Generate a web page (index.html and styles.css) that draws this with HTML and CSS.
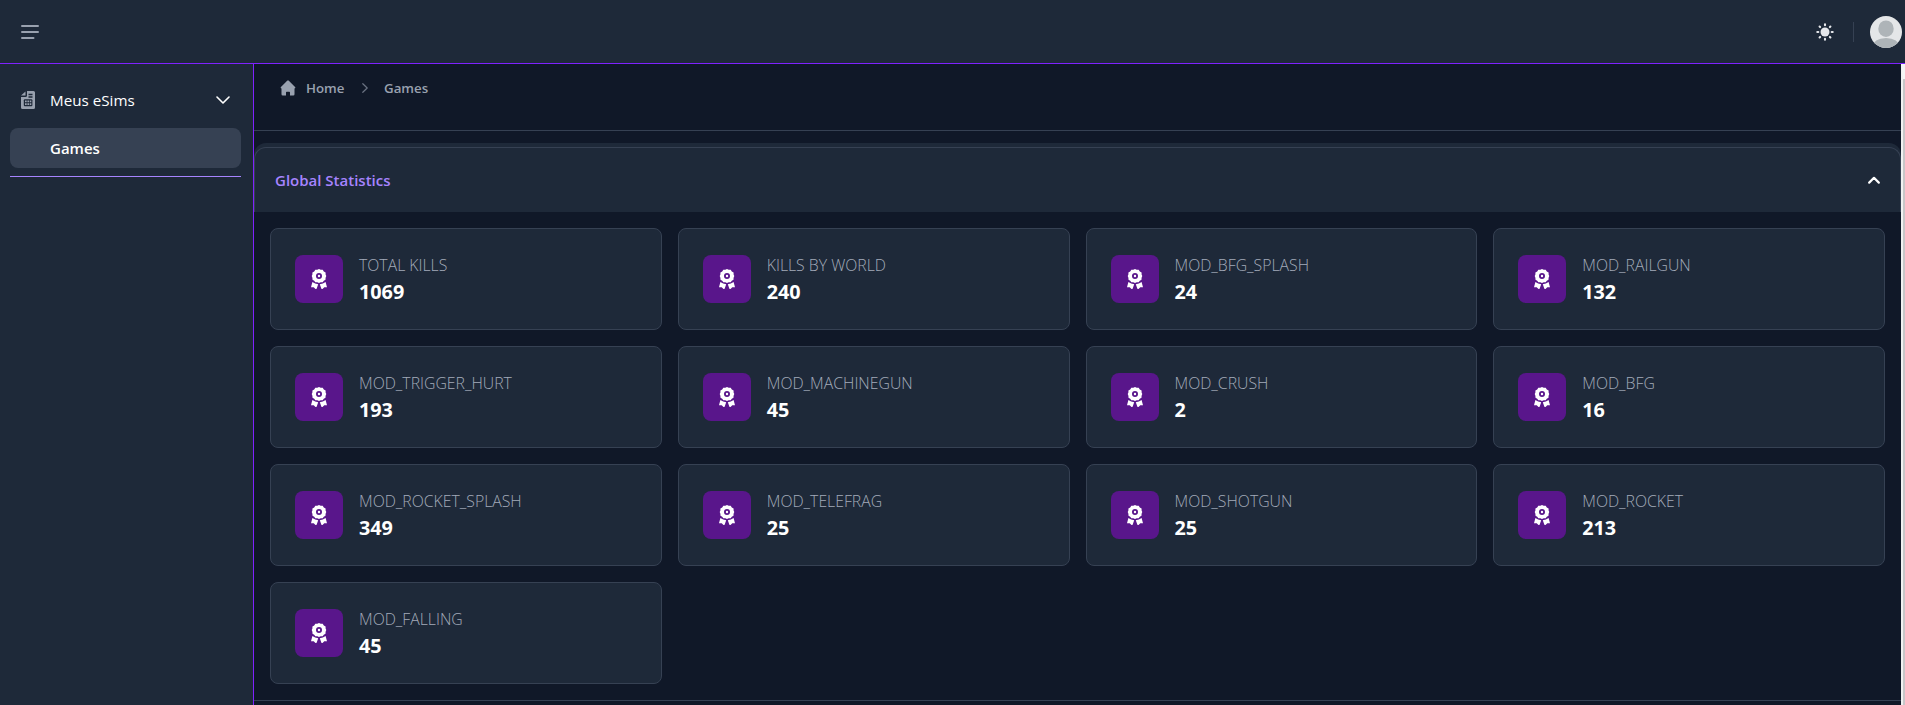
FILE: index.html
```html
<!DOCTYPE html>
<html lang="pt">
<head>
<meta charset="utf-8">
<title>Games</title>
<link rel="stylesheet" href="styles.css">
</head>
<body>
<svg width="0" height="0" class="defs">
  <symbol id="award" viewBox="0 0 16 20">
    <path fill-rule="evenodd" d="M8 0 9.700 .8 11.700 .8 12.800 2.400 14.600 3.500 14.600 5.400 15.300 7.100 14.600 8.800 14.500 10.700 12.800 11.800 11.700 13.300 9.700 13.300 8 14.100 6.300 13.300 4.300 13.300 3.200 11.800 1.500 10.700 1.400 8.800 0.700 7.100 1.400 5.400 1.400 3.500 3.200 2.400 4.300 .8 6.300 .8ZM8 4a3 3 0 1 0 0 6 3 3 0 0 0 0-6Z"/>
    <circle cx="8" cy="7" r="1.200"/>
    <path d="M1.400 13 0 18.300l2.700-.1 1.800 1.700q.8.300 1.200-.5L7.200 15.200Q4 15 1.400 13ZM14.600 13 16 18.300l-2.700-.1-1.800 1.700q-.8.300-1.200-.5L8.800 15.200Q12 15 14.600 13Z"/>
  </symbol>
</svg>
<div class="app">
  <header class="topbar">
    <svg class="menu-icon" width="20" height="16" viewBox="0 0 20 16" fill="none" stroke="#99a1af" stroke-width="2" stroke-linecap="round"><path d="M2 2H18M2 8H18M2 14H13.500"/></svg>
    <div class="tools">
      <svg class="sun" width="18" height="18" viewBox="0 0 18 18" fill="none" stroke="#e5e7eb" stroke-width="2.100" stroke-linecap="round"><circle cx="9" cy="9" r="4.500" fill="#e5e7eb" stroke="none"/><path d="M9 1.300v1M9 15.700v1M1.300 9h1M15.700 9h1M3.600 3.600l.5.500M13.900 13.900l.5.500M3.600 14.400l.5-.5M13.900 4.100l.5-.5"/></svg>
      <span class="divider"></span>
      <svg class="avatar" width="32" height="32" viewBox="0 0 32 32"><defs><clipPath id="round"><circle cx="16" cy="16" r="16"/></clipPath></defs><g clip-path="url(#round)"><rect width="32" height="32" fill="#e4e6e8"/><ellipse cx="16" cy="12.700" rx="7.700" ry="8.300" fill="#aeb4b8"/><path d="M1 32Q4 22 16 22T31 32Z" fill="#aeb4b8"/></g></svg>
    </div>
  </header>
  <div class="body">
    <aside class="sidebar">
      <div class="group">
        <svg width="14" height="18" viewBox="0 0 14 18"><path fill="#99a1af" d="M6 0H12.500Q14 0 14 1.500V16.500Q14 18 12.500 18H1.500Q0 18 0 16.500V6H4.500Q6 6 6 4.500ZM4.500 .4V4.500H0Z"/><path stroke="#1e2939" stroke-width="1.300" fill="none" d="M7.500 3.500h4M7.500 6h4"/><rect x="2.800" y="8.200" width="8.600" height="7" rx="1" fill="#1e2939"/><path fill="#99a1af" d="M4 9.500h1.700v1.700H4zM6.400 9.500h1.600v1.700H6.400zM8.700 9.500h1.600v1.700H8.700zM4 12.200h1.700v1.700H4zM6.400 12.200h1.600v1.700H6.400zM8.700 12.200h1.600v1.700H8.700z"/></svg>
        <span class="group-name">Meus eSims</span>
        <svg class="chev" width="14" height="8" viewBox="0 0 14 8" fill="none" stroke="#fff" stroke-width="1.600" stroke-linecap="round" stroke-linejoin="round"><path d="M1 1l6 6 6-6"/></svg>
      </div>
      <div class="item"><span>Games</span></div>
    </aside>
    <main class="content">
      <nav class="crumbs">
        <svg width="16" height="16" viewBox="0 0 16 16" fill="#99a1af"><path d="M8.600.6 15.300 7.300Q15.700 8.300 14.500 8.500V14.300Q14.500 15.500 13.300 15.500H10V12.500Q10 11.800 9.300 11.800H6.700Q6 11.800 6 12.500V15.500H2.700Q1.500 15.500 1.500 14.300V8.500Q.3 8.300.7 7.300L7.400.6Q8 .2 8.600.6Z"/></svg>
        <span class="home">Home</span>
        <svg class="sep" width="6" height="10" viewBox="0 0 6 10" fill="none" stroke="#6a7282" stroke-width="1.200" stroke-linecap="round" stroke-linejoin="round"><path d="M.8.700 5.200 5 .8 9.300"/></svg>
        <span class="here">Games</span>
      </nav>
      <section class="panel">
        <div class="panel-head">
          <h2>Global Statistics</h2>
          <svg width="12" height="8" viewBox="0 0 12 8" fill="none" stroke="#fff" stroke-width="2.200" stroke-linecap="round" stroke-linejoin="round"><path d="M1.200 6.600 6 1.800l4.800 4.800"/></svg>
        </div>
      </section>
      <div class="cards">
        <article class="card"><div class="badge"><svg><use href="#award"/></svg></div><div><p class="label">TOTAL KILLS</p><p class="value">1069</p></div></article>
        <article class="card"><div class="badge"><svg><use href="#award"/></svg></div><div><p class="label">KILLS BY WORLD</p><p class="value">240</p></div></article>
        <article class="card"><div class="badge"><svg><use href="#award"/></svg></div><div><p class="label">MOD_BFG_SPLASH</p><p class="value">24</p></div></article>
        <article class="card"><div class="badge"><svg><use href="#award"/></svg></div><div><p class="label">MOD_RAILGUN</p><p class="value">132</p></div></article>
        <article class="card"><div class="badge"><svg><use href="#award"/></svg></div><div><p class="label">MOD_TRIGGER_HURT</p><p class="value">193</p></div></article>
        <article class="card"><div class="badge"><svg><use href="#award"/></svg></div><div><p class="label">MOD_MACHINEGUN</p><p class="value">45</p></div></article>
        <article class="card"><div class="badge"><svg><use href="#award"/></svg></div><div><p class="label">MOD_CRUSH</p><p class="value">2</p></div></article>
        <article class="card"><div class="badge"><svg><use href="#award"/></svg></div><div><p class="label">MOD_BFG</p><p class="value">16</p></div></article>
        <article class="card"><div class="badge"><svg><use href="#award"/></svg></div><div><p class="label">MOD_ROCKET_SPLASH</p><p class="value">349</p></div></article>
        <article class="card"><div class="badge"><svg><use href="#award"/></svg></div><div><p class="label">MOD_TELEFRAG</p><p class="value">25</p></div></article>
        <article class="card"><div class="badge"><svg><use href="#award"/></svg></div><div><p class="label">MOD_SHOTGUN</p><p class="value">25</p></div></article>
        <article class="card"><div class="badge"><svg><use href="#award"/></svg></div><div><p class="label">MOD_ROCKET</p><p class="value">213</p></div></article>
        <article class="card"><div class="badge"><svg><use href="#award"/></svg></div><div><p class="label">MOD_FALLING</p><p class="value">45</p></div></article>
      </div>
      <div class="next-panel"></div>
    </main>
    <div class="scrollbar"></div>
  </div>
</div>
</body>
</html>
```
FILE: styles.css
```css
* { box-sizing: border-box; }
body { margin: 0; background: #101828; font-family: "Open Sans", "Noto Sans", sans-serif; color: #fff; overflow: hidden; }
svg { display: block; flex: none; }
.defs { position: absolute; }
p, h2 { margin: 0; }
.app { height: 705px; display: flex; flex-direction: column; }
.topbar { height: 64px; flex: none; background: #1e2939; border-bottom: 1px solid #7f22fe; display: flex; align-items: center; justify-content: space-between; padding: 0 3px 0 20px; }
.tools { display: flex; align-items: center; }
.divider { width: 1px; height: 20px; background: #364153; margin: 0 16px 0 19px; }
.body { flex: 1; min-height: 0; display: flex; }
.sidebar { width: 254px; flex: none; background: #1e2939; border-right: 1px solid #7f22fe; padding: 16px 12px 0 10px; }
.group { height: 40px; display: flex; align-items: center; padding: 0 11px; margin-bottom: 8px; }
.group-name { flex: 1; margin-left: 15px; font-size: 15.200px; line-height: 24px; }
.item { height: 40px; border-radius: 8px; background: #364153; padding-left: 40px; line-height: 40px; font-size: 15px; font-weight: 600; }
.sidebar::after { content: ""; display: block; height: 1px; margin-top: 8px; background: #a684ff; }
.content { flex: 1; min-width: 0; overflow: hidden; }
.crumbs { height: 67px; border-bottom: 1px solid #364153; display: flex; padding: 14px 0 0 26px; color: #99a1af; font-size: 13.300px; font-weight: 600; line-height: 20px; }
.crumbs svg { margin-top: 2px; }
.home { margin-left: 10px; width: 56px; }
.crumbs .sep { margin: 5px 16px 0 0; }
.panel { margin-top: 12px; background: #1e2939; border-radius: 12px 12px 0 0; padding-top: 4px; }
.panel-head { height: 65px; border: 1px solid #364153; border-bottom: 0; border-radius: 12px 12px 0 0; padding: 0 20px; display: flex; align-items: center; justify-content: space-between; }
h2 { font-size: 15px; font-weight: 600; line-height: 24px; color: #a684ff; }
.cards { display: grid; grid-template-columns: repeat(4, minmax(0, 1fr)); gap: 16px; padding: 16px; }
.card { height: 102px; border: 1px solid #364153; border-radius: 8px; background: #1e2939; display: flex; align-items: center; gap: 16px; padding: 0 24px; }
.badge { width: 48px; height: 48px; border-radius: 8px; background: #59168b; display: grid; place-items: center; }
.badge svg { width: 16px; height: 20px; fill: #fff; }
.label { font-size: 15.800px; line-height: 24px; font-weight: 300; color: #a3abb9; }
.value { font-size: 19.800px; line-height: 28px; padding-top: 1px; margin-bottom: -1px; font-weight: 700; }
.next-panel { border-top: 1px solid #364153; }
.scrollbar { width: 4px; flex: none; background: #c8c6c8; border-left: 2px solid #f1f1f1; border-top: 15px solid #f5f5f5; }
```
